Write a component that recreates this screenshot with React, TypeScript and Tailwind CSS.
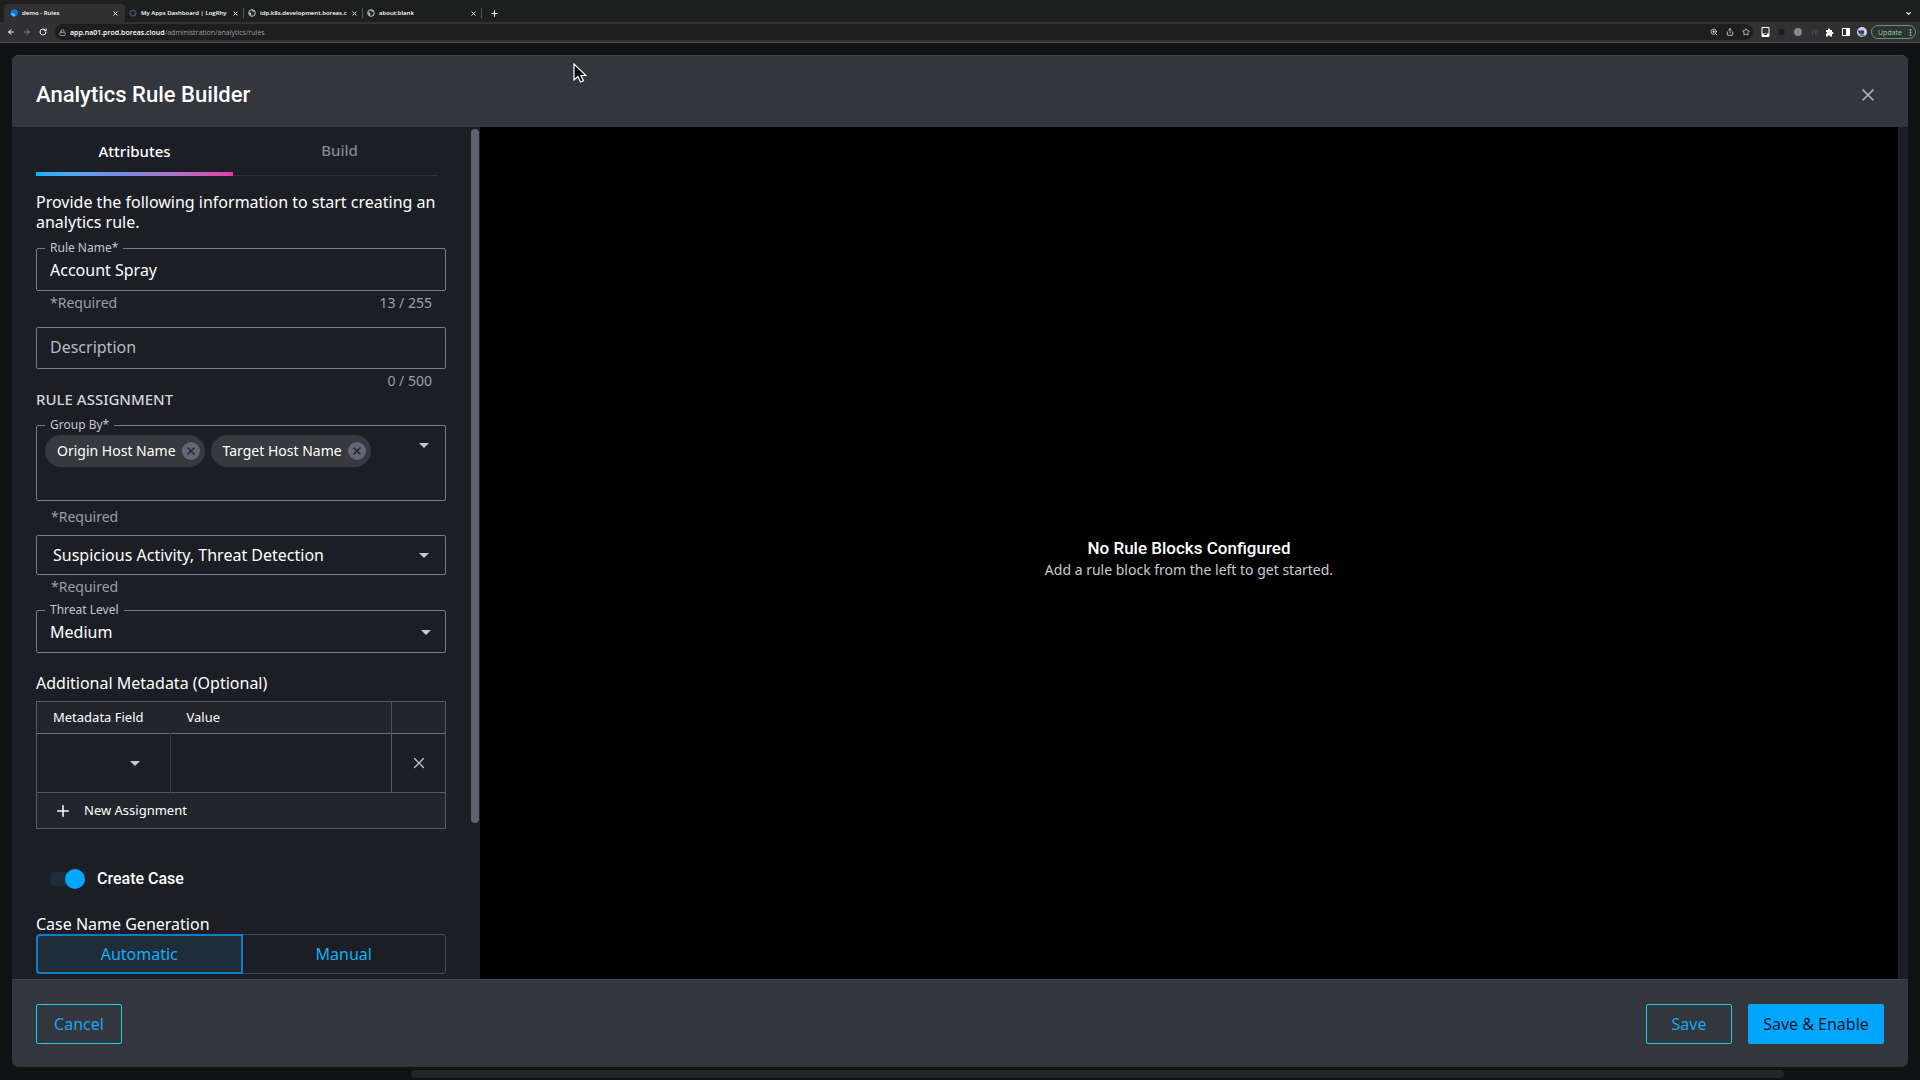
import type { ReactNode } from 'react';
import {
  ArrowLeft,
  ArrowRight,
  ChevronDown,
  EllipsisVertical,
  Lock,
  Plus,
  RotateCw,
  Share,
  Star,
  X,
  ZoomIn,
} from 'lucide-react';

const browserTabs = [
  { title: 'demo - Rules', icon: 'demo', active: true },
  { title: 'My Apps Dashboard | LogRhy', icon: 'apps', active: false },
  { title: 'idp.k8s.development.boreas.c', icon: 'globe', active: false },
  { title: 'about:blank', icon: 'globe', active: false },
];

function TabIcon({ name }: { name: string }) {
  if (name === 'demo') {
    return (
      <svg className="size-2 shrink-0" viewBox="0 0 8 8">
        <circle cx="4.2" cy="3.8" r="3.6" fill="#1273e6" />
        <path d="M0 4.2h4.5l1 2.6-2.3.9z" fill="#35c3f5" />
      </svg>
    );
  }
  if (name === 'apps') {
    return (
      <svg className="size-2 shrink-0" viewBox="0 0 8 8">
        <circle cx="4" cy="4" r="2.8" fill="none" stroke="#4d5a7c" strokeWidth="1.6" strokeDasharray="1.4 .5" />
      </svg>
    );
  }
  return (
    <svg className="size-2 shrink-0" viewBox="0 0 8 8">
      <circle cx="4" cy="4" r="3.3" fill="#26292a" stroke="#c3c6c8" />
      <path d="M1 3.2l2 .6.4 1.6-1 1.2zM3.6 1.2l1 1.4 2.2.2-.6-1.4z" fill="#c3c6c8" />
    </svg>
  );
}

function BrowserChrome() {
  return (
    <header className="shrink-0 font-['Open_Sans',sans-serif] text-[7px] leading-none text-white">
      <div className="flex h-[22px] items-end bg-[#1d1f1f] pl-1">
        {browserTabs.map((tab) => (
          <div
            key={tab.title}
            className={
              tab.active
                ? 'flex h-[18px] w-[121px] items-center gap-1 rounded-t bg-[#313134] pr-1.5 pl-1.5'
                : 'flex h-[18px] w-[119px] items-center gap-1 pl-1'
            }
          >
            <TabIcon name={tab.icon} />
            <span className="flex-1 text-[6px] font-semibold whitespace-nowrap">{tab.title}</span>
            <button aria-label={`Close ${tab.title}`}>
              <X size={7} strokeWidth={3} />
            </button>
            {!tab.active && <i className="h-2.5 w-px bg-[#55585a]" />}
          </div>
        ))}
        <button aria-label="New tab" className="ml-2 flex h-[18px] items-center">
          <Plus size={9} strokeWidth={3} />
        </button>
        <span className="flex-1" />
        <button aria-label="Search tabs" className="mr-2 flex h-[18px] items-center">
          <ChevronDown size={7} strokeWidth={4} />
        </button>
      </div>

      <div className="flex h-[21px] items-center gap-2 border-b border-[#4b4c50] bg-[#313134] pr-1 pl-[7px]">
        <button aria-label="Back"><ArrowLeft size={8} strokeWidth={3} /></button>
        <button aria-label="Forward" className="text-[#85878b]"><ArrowRight size={8} strokeWidth={3} /></button>
        <button aria-label="Reload"><RotateCw size={8} strokeWidth={3} /></button>
        <div className="flex h-4 flex-1 items-center rounded-full bg-[#1d1f1f] pr-[3px] pl-1">
          <Lock size={7} strokeWidth={3} className="mr-1 text-[#a5a7aa]" />
          <span className="font-semibold">app.na01.prod.boreas.cloud</span>
          <span className="text-[#9a9ca0]">/administration/analytics/rules</span>
          <span className="flex-1" />
          <span className="flex gap-2 text-[#d5d6d8]">
            <ZoomIn size={8} strokeWidth={2.5} />
            <Share size={8} strokeWidth={2.5} />
            <Star size={8} strokeWidth={2.5} />
          </span>
        </div>
        <svg className="h-2.5 w-[108px]" viewBox="0 0 108 10">
          <path d="M1 .5h7v9H1z" fill="none" stroke="#fff" />
          <path d="M1 6.500h7v3H1z" fill="#fff" />
          <path d="M2.5 7h4l-1 1h-2z" fill="#222" />
          <circle cx="20.5" cy="5" r="3.2" fill="#1c1d1f" />
          <circle cx="37" cy="5" r="4" fill="#85898d" />
          <circle cx="37" cy="5" r="1.6" fill="#3aa68c" />
          <path d="M51.5 8V3.5h2M54.5 8V3.5h1.800V8" fill="none" stroke="#3a4a66" />
          <path d="M65 3h2c-.6-2 2.6-2 2 0h2v2c2-.6 2 2.6 0 2v2.500h-2.200c0-1.600-1.800-1.600-1.800 0h-2V7c1.400 0 1.400-2 0-2z" fill="#fff" />
          <path d="M81.500 1.500h7v7h-7z" fill="none" stroke="#fff" />
          <path d="M85 1.500h3.500v7H85z" fill="#fff" />
          <circle cx="101" cy="5" r="5" fill="#c9cfe4" />
          <path d="M97 3.500h6v3.200h-5z" fill="#26357e" />
          <path d="M98 8l3-1.500 3 2-2 1.300z" fill="#4f9146" />
        </svg>
        <button className="-ml-1.5 flex h-3.5 items-center gap-1 rounded-full border border-[#5b9b76] pl-1.5 text-[#7dd69c]">
          Update
          <EllipsisVertical size={9} strokeWidth={3} />
        </button>
      </div>
    </header>
  );
}

function Caret() {
  return (
    <svg className="pointer-events-none h-[5px] w-2.5 shrink-0" viewBox="0 0 10 5">
      <path d="M0 0h10L5 5z" fill="#c6c8d2" />
    </svg>
  );
}

function OutlinedField({ id, label, children }: { id?: string; label: string; children: ReactNode }) {
  return (
    <fieldset className="rounded-xs border border-[#767b94] px-2">
      <legend className="px-[5px] text-xs leading-4 text-[#c4c6ce]">
        {id ? <label htmlFor={id}>{label}</label> : label}
      </legend>
      {children}
    </fieldset>
  );
}

function Chip({ children }: { children: string }) {
  return (
    <span className="flex h-8 items-center gap-1.5 rounded-full bg-[#36393d] pr-[5px] pl-3 text-sm">
      {children}
      <button
        type="button"
        aria-label={`Remove ${children}`}
        className="flex size-[18px] items-center justify-center rounded-full bg-[#636679] text-[#25272d]"
      >
        <X size={12} strokeWidth={3} />
      </button>
    </span>
  );
}

function AttributesForm() {
  return (
    <form className="flex w-[459px] flex-col self-start pr-[25px] pl-6">
      <div role="tablist" className="flex w-[402px]">
        <button type="button" role="tab" aria-selected="true" className="w-[197px] pt-[13px] text-[15px] leading-5 font-medium">
          Attributes
          <span className="mt-[11px] block h-1 bg-linear-to-r from-[#00b2ff] via-[#7f86e0] to-[#e838a4]" />
        </button>
        <button
          type="button"
          role="tab"
          aria-selected="false"
          className="flex-1 border-b border-[#30333b] pt-[13px] pb-[15px] pl-2 text-[15px] leading-5 font-medium text-[#85878f]"
        >
          Build
        </button>
      </div>

      <p className="mt-4 text-base leading-5">
        Provide the following information to start creating an analytics rule.
      </p>

      <div className="mt-2">
        <OutlinedField id="rule-name" label="Rule Name*">
          <input id="rule-name" defaultValue="Account Spray" className="block h-[34px] w-full px-[5px] pb-1.5 text-base outline-none" />
        </OutlinedField>
        <div className="flex justify-between px-3.5 pt-1 text-sm leading-4 text-[#9c9eaa]">
          <span>*Required</span>
          <span>13 / 255</span>
        </div>
      </div>

      <div className="mt-4">
        <input
          aria-label="Description"
          placeholder="Description"
          className="block h-[42px] w-full rounded-xs border border-[#767b94] px-[13px] pb-0.5 text-base outline-none placeholder:text-[#b9bbc5]"
        />
        <div className="px-3.5 pt-1 text-right text-sm leading-4 text-[#9c9eaa]">0 / 500</div>
      </div>

      <h2 className="text-[15px] leading-5 font-medium text-[#d3d4da]">RULE ASSIGNMENT</h2>

      <div className="mt-2">
        <OutlinedField label="Group By*">
          <div className="flex h-[67px] items-start gap-1.5 pt-0.5">
            <Chip>Origin Host Name</Chip>
            <Chip>Target Host Name</Chip>
            <button type="button" aria-label="Open group by" className="mt-2 mr-2 ml-auto">
              <Caret />
            </button>
          </div>
        </OutlinedField>
        <p className="px-[15px] pt-2 text-sm leading-4 text-[#9c9eaa]">*Required</p>
      </div>

      <div className="mt-2.5">
        <div className="flex items-center rounded-xs border border-[#767b94] pr-4">
          <select aria-label="Categories" className="h-[38px] flex-1 appearance-none pl-4 text-base outline-none">
            <option>Suspicious Activity, Threat Detection</option>
          </select>
          <Caret />
        </div>
        <p className="px-[15px] pt-1 text-sm leading-4 text-[#9c9eaa]">*Required</p>
      </div>

      <div className="mt-[7px]">
        <OutlinedField id="threat-level" label="Threat Level">
          <div className="flex h-[34px] items-center pr-1.5 pb-1.5">
            <select id="threat-level" className="flex-1 appearance-none pl-[5px] text-base outline-none">
              <option>Medium</option>
            </select>
            <Caret />
          </div>
        </OutlinedField>
      </div>

      <h2 className="mt-5 text-base leading-5">Additional Metadata (Optional)</h2>

      <table className="mt-2 w-full table-fixed border-collapse border border-[#565a66] text-[13px]">
        <thead>
          <tr className="h-8 border-b border-[#6a6e7c] bg-[#22252c] text-left">
            <th className="w-[134px] pl-4 font-normal">Metadata Field</th>
            <th className="border-r border-[#4c5062] pl-4 font-normal">Value</th>
            <th className="w-[54px]" aria-label="Remove" />
          </tr>
        </thead>
        <tbody>
          <tr className="h-[59px] border-b border-[#565a66]">
            <td className="border-r border-[#33363e]">
              <button type="button" aria-label="Choose metadata field" className="flex w-full justify-end pr-[30px]">
                <Caret />
              </button>
            </td>
            <td className="border-r border-[#565a66] px-4">
              <input aria-label="Value" className="w-full outline-none" />
            </td>
            <td>
              <button type="button" aria-label="Remove row" className="flex w-full justify-center text-[#c0c2cc]">
                <X size={18} strokeWidth={1.75} />
              </button>
            </td>
          </tr>
          <tr className="h-9 bg-[#22252c]">
            <td colSpan={3}>
              <button type="button" className="flex items-center gap-3 pl-[17px]">
                <Plus size={18} strokeWidth={2} />
                New Assignment
              </button>
            </td>
          </tr>
        </tbody>
      </table>

      <label className="mt-10 flex items-center gap-3 pl-3.5 font-['Roboto',sans-serif] text-base leading-5 font-medium">
        <input
          type="checkbox"
          role="switch"
          defaultChecked
          className="flex h-3.5 w-[35px] appearance-none items-center justify-end rounded bg-[#1d2d3a] before:size-5 before:shrink-0 before:rounded-full before:bg-[#00a6ff]"
        />
        Create Case
      </label>

      <h2 className="mt-[25px] text-base leading-5">Case Name Generation</h2>
      <div className="flex h-10 text-base">
        <button type="button" className="flex-1 rounded-l border-2 border-[#127dc6] bg-[#1f2d39] text-[#12b0f5]">
          Automatic
        </button>
        <button type="button" className="flex-1 rounded-r border border-l-0 border-[#45484f] text-[#12b0f5]">
          Manual
        </button>
      </div>
    </form>
  );
}

function RuleBuilder() {
  return (
    <section
      role="dialog"
      aria-labelledby="builder-title"
      className="mx-3 mt-3 flex min-h-0 flex-1 flex-col overflow-hidden rounded-md border-t border-[#44474f] bg-[#33363d]"
    >
      <div className="flex h-[71px] shrink-0 items-center justify-between pt-1.5 pr-[30px] pl-6">
        <h1 id="builder-title" className="font-['Roboto',sans-serif] text-[22px] font-medium">
          Analytics Rule Builder
        </h1>
        <button aria-label="Close" className="text-[#b5b7be]">
          <X size={20} strokeWidth={2} />
        </button>
      </div>

      <div className="flex min-h-0 flex-1 bg-[#1b1e25]">
        <div className="flex shrink-0 overflow-hidden pr-px">
          <AttributesForm />
          <div className="mt-0.5 h-[694px] w-2 rounded-full bg-[#5d606e]" />
        </div>
        <main className="mr-2.5 flex flex-1 flex-col items-center justify-center bg-[#010102] pt-2.5 text-center">
          <h2 className="font-['Roboto',sans-serif] text-[17px] leading-6 font-medium">No Rule Blocks Configured</h2>
          <p className="text-sm leading-5 text-[#c9cad0]">Add a rule block from the left to get started.</p>
        </main>
      </div>

      <div className="flex h-[88px] shrink-0 items-center gap-4 border-t border-[#44474f] px-6 text-base">
        <button className="h-10 w-[86px] rounded-xs border border-[#10cdea] text-[#12a8f0]">Cancel</button>
        <span className="flex-1" />
        <button className="h-10 w-[86px] rounded-xs border border-[#10cdea] text-[#12a8f0]">Save</button>
        <button className="h-10 w-[136px] rounded-xs bg-[#00a6ff] text-[#0b1c2a]">Save &amp; Enable</button>
      </div>
    </section>
  );
}

export default function App() {
  return (
    <div className="relative flex h-screen flex-col overflow-hidden bg-[#111214] font-['Noto_Sans',sans-serif] text-white">
      <BrowserChrome />
      <RuleBuilder />
      {/* page scroll bar */}
      <div className="flex h-[13px] shrink-0 items-center pr-[136px] pl-[411px]">
        <div className="h-2 flex-1 rounded-full bg-[#232427]" />
      </div>

      {/* mouse pointer */}
      <svg className="pointer-events-none absolute top-[63px] left-[573px] h-[22px] w-3.5" viewBox="0 0 14 22">
        <path d="M1 1v16l4-3.500 2.500 5.500 3-1.300-2.500-5.200h5z" fill="#000" stroke="#fff" strokeWidth="1.200" />
      </svg>
    </div>
  );
}
